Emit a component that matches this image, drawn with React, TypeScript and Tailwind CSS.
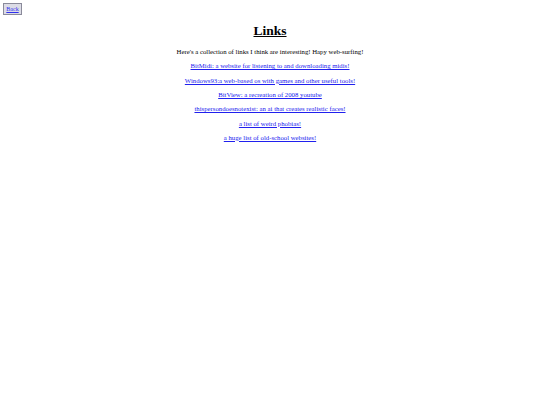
import React from 'react';

const links = [
  'BitMidi: a website for listening to and downloading midis!',
  'Windows93:a web-based os with games and other useful tools!',
  'BitView: a recreation of 2008 youtube',
  'thispersondoesnotexist: an ai that creates realistic faces!',
  'a list of weird phobias!',
  'a huge list of old-school websites!',
];

export default function App() {
  return (
    <div className="min-h-[405px] w-[540px] bg-white text-black" style={{ fontFamily: '"Liberation Serif", "Times New Roman", serif' }}>
      <div className="flex pl-[3px] pt-[3px]">
        <button className="flex h-[12px] w-[19px] items-center justify-center border border-[#8a8a9a] bg-[#dcdce6] text-[6px] leading-none text-[#3030ee] underline">
          Back
        </button>
      </div>
      <h1 className="mt-[8px] text-center text-[13.5px] font-bold leading-[16px] underline">Links</h1>
      <div className="mt-[8px] flex flex-col items-center text-[6.75px] leading-[10px]">
        <p className="mb-[4.4px]">Here's a collection of links I think are interesting! Hapy web-surfing!</p>
        {links.map((l) => (
          <a key={l} href="#" className="mb-[4.3px] text-[#2020ee] underline">
            {l}
          </a>
        ))}
      </div>
    </div>
  );
}
